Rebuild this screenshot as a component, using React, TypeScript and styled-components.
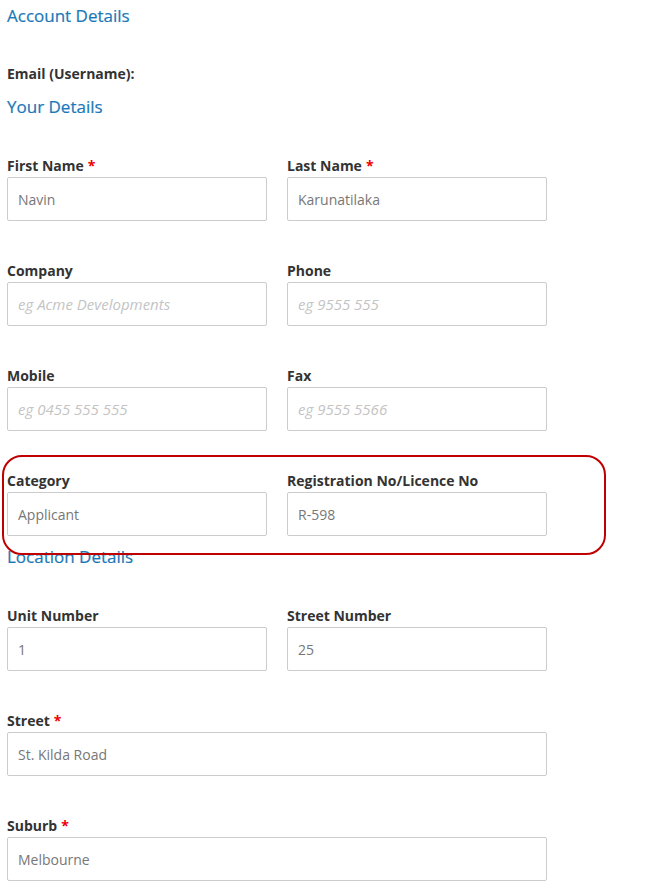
import React from 'react';
import styled, { createGlobalStyle } from 'styled-components';

const GlobalStyle = createGlobalStyle`
  body {
    margin: 0;
    background: #fff;
    font-family: "Open Sans", "Liberation Sans", sans-serif;
    color: #333;
  }
`;

const Page = styled.div`
  width: 659px;
  padding: 5px 7px 0;
  box-sizing: border-box;
`;

const SectionTitle = styled.h3<{ gapAfter: number }>`
  margin: 0 0 ${p => p.gapAfter}px;
  font-size: 17px;
  line-height: 22px;
  font-weight: 400;
  color: #1a78b8;
  -webkit-text-stroke: 0.2px #1a78b8;
`;

const StaticLabel = styled.div`
  margin: 37px 0 12px;
  font-size: 14px;
  line-height: 20px;
  font-weight: 700;
`;

const FormRow = styled.div<{ single?: boolean; gapAfter?: number }>`
  position: relative;
  display: grid;
  grid-template-columns: ${p => (p.single ? '540px' : '260px 260px')};
  column-gap: 20px;
  margin-bottom: ${p => p.gapAfter ?? 39}px;
`;

const Field = styled.div`
  display: flex;
  flex-direction: column;
`;

const Label = styled.label`
  font-size: 14px;
  line-height: 20px;
  font-weight: 700;
  color: #333;
  margin: 1px 0 1px;
`;

const Required = styled.span`
  color: #e00;
  margin-left: 4px;
`;

const Input = styled.input`
  height: 44px;
  box-sizing: border-box;
  border: 1px solid #ccc;
  border-radius: 2px;
  padding: 0 10px;
  font-family: "Open Sans", "Liberation Sans", sans-serif;
  font-size: 14px;
  color: #777;
  background: #fff;
  outline: none;

  &::placeholder {
    color: #c4c4c4;
    font-style: italic;
    font-size: 15px;
  }
`;

const Highlight = styled.div`
  position: absolute;
  left: -5px;
  top: -15px;
  width: 604px;
  bottom: -19px;
  box-sizing: border-box;
  border: 2.5px solid #c00000;
  border-radius: 20px;
  pointer-events: none;
`;

type FieldDef = { label: string; value?: string; placeholder?: string; required?: boolean };

const FormField = ({ label, value, placeholder, required }: FieldDef) => (
  <Field>
    <Label>
      {label}
      {required && <Required>*</Required>}
    </Label>
    <Input defaultValue={value} placeholder={placeholder} readOnly />
  </Field>
);

const App: React.FC = () => (
  <>
    <GlobalStyle />
    <Page>
      <SectionTitle gapAfter={0}>Account Details</SectionTitle>
      <StaticLabel>Email (Username):</StaticLabel>
      <SectionTitle gapAfter={37}>Your Details</SectionTitle>

      <FormRow>
        <FormField label="First Name" value="Navin" required />
        <FormField label="Last Name" value="Karunatilaka" required />
      </FormRow>
      <FormRow>
        <FormField label="Company" placeholder="eg Acme Developments" />
        <FormField label="Phone" placeholder="eg 9555 555" />
      </FormRow>
      <FormRow>
        <FormField label="Mobile" placeholder="eg 0455 555 555" />
        <FormField label="Fax" placeholder="eg 9555 5566" />
      </FormRow>
      <FormRow gapAfter={10}>
        <FormField label="Category" value="Applicant" />
        <FormField label="Registration No/Licence No" value="R-598" />
        <Highlight />
      </FormRow>

      <SectionTitle gapAfter={37}>Location Details</SectionTitle>
      <FormRow>
        <FormField label="Unit Number" value="1" />
        <FormField label="Street Number" value="25" />
      </FormRow>
      <FormRow single>
        <FormField label="Street" value="St. Kilda Road" required />
      </FormRow>
      <FormRow single>
        <FormField label="Suburb" value="Melbourne" required />
      </FormRow>
    </Page>
  </>
);

export default App;
